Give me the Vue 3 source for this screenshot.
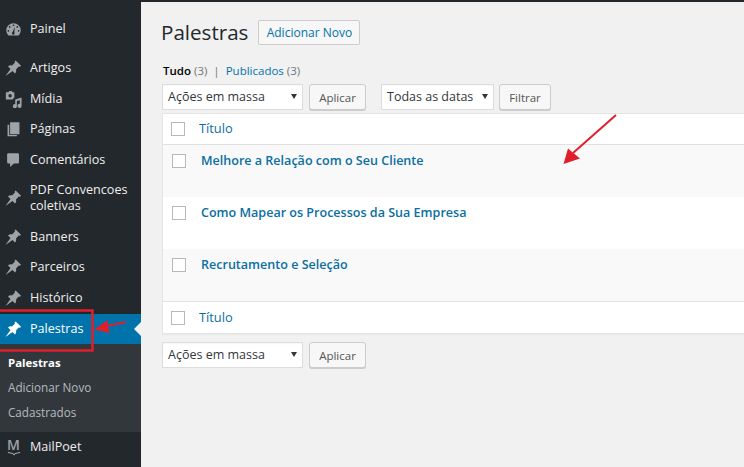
<script setup>
const pin = 'M10.7 .5L16 5.800L14.800 7L14 6.300L11 9.500C11.500 11 11 12.500 10 13.500L7.500 11L.5 16L5.500 9L3 6.500C4 5.500 5.500 5 7 5.500L10 2.500L9.500 1.700z'
const menuTop = [
  { label: 'Artigos', icon: 'pin' },
  { label: 'Mídia', icon: 'media' },
  { label: 'Páginas', icon: 'pages' },
  { label: 'Comentários', icon: 'comment' },
  { label: 'PDF Convencoes coletivas', icon: 'pin', tall: true },
  { label: 'Banners', icon: 'pin' },
  { label: 'Parceiros', icon: 'pin' },
  { label: 'Histórico', icon: 'pin' },
]
const rows = [
  'Melhore a Relação com o Seu Cliente',
  'Como Mapear os Processos da Sua Empresa',
  'Recrutamento e Seleção',
]
</script>

<template>
  <div class="page">
    <div class="topbar"></div>
    <div class="shell">
      <aside class="side">
        <div class="item painel">
          <svg class="ico" viewBox="0 0 20 20"><path fill-rule="evenodd" d="M10 2.500a8.500 8.500 0 0 1 8.500 8.500c0 2.400-1 4.500-2.500 6H4c-1.500-1.500-2.500-3.600-2.500-6A8.500 8.500 0 0 1 10 2.500zM10 4a1 1 0 1 0 0 2 1 1 0 0 0 0-2zM5.500 6a1 1 0 1 0 0 2 1 1 0 0 0 0-2zM14.500 6a1 1 0 1 0 0 2 1 1 0 0 0 0-2zM4 10.500a1 1 0 1 0 0 2 1 1 0 0 0 0-2zM16 10.500a1 1 0 1 0 0 2 1 1 0 0 0 0-2zM11.500 7l-2.500 6a1.600 1.600 0 1 0 2 .5z"/></svg>
          <span>Painel</span>
        </div>
        <div v-for="m in menuTop" :key="m.label" class="item" :class="{ tall: m.tall }">
          <svg class="ico" :viewBox="m.icon === 'pin' ? '0 0 17 17' : '0 0 20 20'">
            <path v-if="m.icon === 'pin'" :d="pin" />
            <path v-else-if="m.icon === 'media'" fill-rule="evenodd" d="M1 1.500h3l1-1.500h3l1 1.500h2v7H9.500v1.500H1zM6 3.500a2 2 0 1 0 0 4 2 2 0 0 0 0-4zM19.500 7.500v10a2.400 2.400 0 1 1-2-2.400V11l-3.500.8v6a2.400 2.400 0 1 1-2-2.300V10z" />
            <path v-else-if="m.icon === 'pages'" d="M6 1.500h11v14H6zM3 4.500h2v12h9v1.500H3z" />
            <path v-else d="M4 1.500h11a1.500 1.500 0 0 1 1.500 1.500v9a1.500 1.500 0 0 1-1.500 1.500h-4.500L6 17.500v-4H4A1.500 1.500 0 0 1 2.500 12V3A1.500 1.500 0 0 1 4 1.500z" />
          </svg>
          <span>{{ m.label }}</span>
        </div>
        <div class="item current">
          <svg class="ico" viewBox="0 0 17 17"><path :d="pin" /></svg>
          <span>Palestras</span>
          <i class="notch"></i>
        </div>
        <div class="submenu">
          <div class="sub strong">Palestras</div>
          <div class="sub">Adicionar Novo</div>
          <div class="sub">Cadastrados</div>
        </div>
        <div class="item mail">
          <span class="m-ico">
            <b>M</b>
            <svg viewBox="0 0 16 5"><path d="M1 1c2 .8 4 1.200 5.500 1.400L8 4l1.500-1.600C11 2.200 13 1.800 15 1" /></svg>
          </span>
          <span>MailPoet</span>
        </div>
      </aside>

      <main class="main">
        <div class="head">
          <h1>Palestras</h1>
          <a class="add">Adicionar Novo</a>
        </div>
        <div class="tabs">
          <b>Tudo</b> <span class="n">(3)</span>
          <span class="sep">|</span>
          <a>Publicados</a> <span class="n">(3)</span>
        </div>
        <div class="actions">
          <div class="select bulk"><span>Ações em massa</span><i class="caret"></i></div>
          <button class="btn apply">Aplicar</button>
          <div class="select dates"><span>Todas as datas</span><i class="caret"></i></div>
          <button class="btn filter">Filtrar</button>
        </div>
        <div class="table">
          <div class="thead">
            <i class="check"></i><a>Título</a>
          </div>
          <div v-for="(r, i) in rows" :key="r" class="row" :class="{ alt: i % 2 === 0 }">
            <i class="check"></i><a>{{ r }}</a>
          </div>
          <div class="tfoot">
            <i class="check"></i><a>Título</a>
          </div>
        </div>
        <div class="actions bottom">
          <div class="select bulk"><span>Ações em massa</span><i class="caret"></i></div>
          <button class="btn apply">Aplicar</button>
        </div>
      </main>
    </div>

    <svg class="marks" viewBox="0 0 744 467" width="744" height="467">
      <path d="M-4 310.500H92.500V350.500H-4" fill="none" stroke="#e01f2b" stroke-width="2.500" />
      <path d="M126 322L107 326" stroke="#e01f2b" stroke-width="2" fill="none" />
      <path d="M94 329.500L108 320L107.500 326L110 333z" fill="#e01f2b" />
      <path d="M616 115L573 153" stroke="#e01f2b" stroke-width="2" fill="none" />
      <path d="M563.500 164L568 148.500L580 158.500z" fill="#e01f2b" />
    </svg>
  </div>
</template>

<style>
html, body { margin: 0; background: #f1f1f1; overflow: hidden; }
</style>

<style scoped>
.page {
  position: relative;
  width: 744px;
  height: 467px;
  overflow: hidden;
  font-family: "Open Sans", "Noto Sans", sans-serif;
  font-size: 13px;
  color: #444;
  background: #f1f1f1;
}
.topbar { height: 2px; background: #23282d; }
.shell { display: flex; height: 465px; }
.side {
  width: 141px;
  flex: none;
  background: #23282d;
  color: #eee;
  padding-top: 12px;
  box-sizing: border-box;
}
.item {
  display: flex;
  align-items: center;
  gap: 8px;
  height: 30.500px;
  padding-left: 5px;
  font-size: 12.600px;
  line-height: 16px;
  position: relative;
}
.painel { margin-bottom: 8.500px; }
.tall { height: 46.500px; }
.ico { width: 17px; height: 17px; flex: none; fill: #9ea3a8; margin-top: 1px; }
.current { background: #0073aa; color: #fff; height: 30px; margin-top: 1px; }
.current .ico { fill: #fff; }
.notch {
  position: absolute;
  right: 0;
  top: 8px;
  border: 7px solid transparent;
  border-right-color: #f1f1f1;
  border-left-width: 0;
}
.submenu {
  background: #32373c;
  height: 88px;
  padding-top: 6.500px;
  box-sizing: border-box;
}
.sub {
  height: 24.500px;
  line-height: 24.500px;
  padding-left: 8px;
  font-size: 11.700px;
  color: #b4b9be;
}
.strong { color: #fff; font-weight: 700; font-size: 11.400px; }
.mail { height: 30px; margin-top: 0; }
.m-ico {
  width: 17px;
  flex: none;
  display: flex;
  flex-direction: column;
  align-items: center;
  color: #9ea3a8;
  line-height: 12px;
  font-size: 14px;
}
.m-ico b { font-weight: 600; }
.m-ico svg { width: 14px; height: 5px; fill: none; stroke: #9ea3a8; stroke-width: 1.200; }
.main { flex: 1; min-width: 0; padding-left: 21px; overflow: hidden; }
.head { display: flex; align-items: center; height: 25px; margin-top: 18px; }
h1 {
  margin: 0 0 0 -1px;
  font-size: 20.600px;
  font-weight: 400;
  color: #23282d;
  line-height: 25px;
}
.add {
  margin-left: 10px;
  width: 102px;
  height: 25px;
  box-sizing: border-box;
  border: 1px solid #ccc;
  border-radius: 2px;
  background: #f7f7f7;
  color: #0073aa;
  font-size: 12px;
  font-weight: 500;
  line-height: 23px;
  text-align: center;
}
.tabs {
  margin-top: 16px;
  padding-left: 1px;
  height: 20px;
  line-height: 20px;
  font-size: 11.500px;
  color: #555;
  white-space: pre-wrap;
}
.tabs b { color: #000; font-weight: 600; }
.tabs a { color: #0073aa; }
.n { color: #72777c; }
.sep { margin: 0 6px; color: #72777c; }
.actions { display: flex; align-items: center; margin-top: 3px; height: 26px; }
.select {
  box-sizing: border-box;
  height: 26px;
  background: #fff;
  border: 1px solid #ddd;
  display: flex;
  align-items: center;
  justify-content: space-between;
  padding: 0 5px 1px;
  font-size: 12.500px;
  color: #32373c;
  box-shadow: inset 0 1px 2px rgba(0,0,0,.04);
}
.bulk { width: 141px; }
.dates { width: 113px; margin-left: 15px; }
.caret {
  width: 0;
  height: 0;
  border: 3px solid transparent;
  border-top: 5px solid #32373c;
  border-bottom: 0;
}
.btn {
  font-family: inherit;
  box-sizing: border-box;
  height: 26px;
  padding: 0;
  background: #f7f7f7;
  border: 1px solid #ccc;
  border-radius: 3px;
  box-shadow: 0 1px 0 #ccc;
  color: #555;
  font-size: 11.500px;
}
.apply { width: 57px; margin-left: 6px; }
.filter { width: 52px; margin-left: 5px; }
.table {
  margin-top: 3px;
  background: #fff;
  border: 1px solid #e5e5e5;
  border-right: 0;
  box-shadow: 0 1px 1px rgba(0,0,0,.04);
}
.thead, .tfoot {
  display: flex;
  align-items: center;
  padding-left: 8px;
  gap: 14px;
  color: #0a6fa3;
  font-size: 12.800px;
}
.thead a, .tfoot a { margin-top: -2px; }
.thead { height: 30px; border-bottom: 1px solid #e1e1e1; }
.tfoot { height: 31px; border-top: 1px solid #e1e1e1; }
.row {
  height: 52px;
  display: flex;
  align-items: flex-start;
  padding: 9px 0 0 9px;
  box-sizing: border-box;
  gap: 15px;
  color: #0a6fa3;
  font-size: 12.550px;
  font-weight: 600;
  background: #fff;
}
.row a { line-height: 16px; margin-top: -1px; }
.alt { background: #f9f9f9; }
.check {
  width: 14px;
  height: 14px;
  flex: none;
  box-sizing: border-box;
  border: 1px solid #b4b9be;
  background: #fff;
}
.bottom { margin-top: 8px; }
.marks { position: absolute; left: 0; top: 0; pointer-events: none; }
</style>
